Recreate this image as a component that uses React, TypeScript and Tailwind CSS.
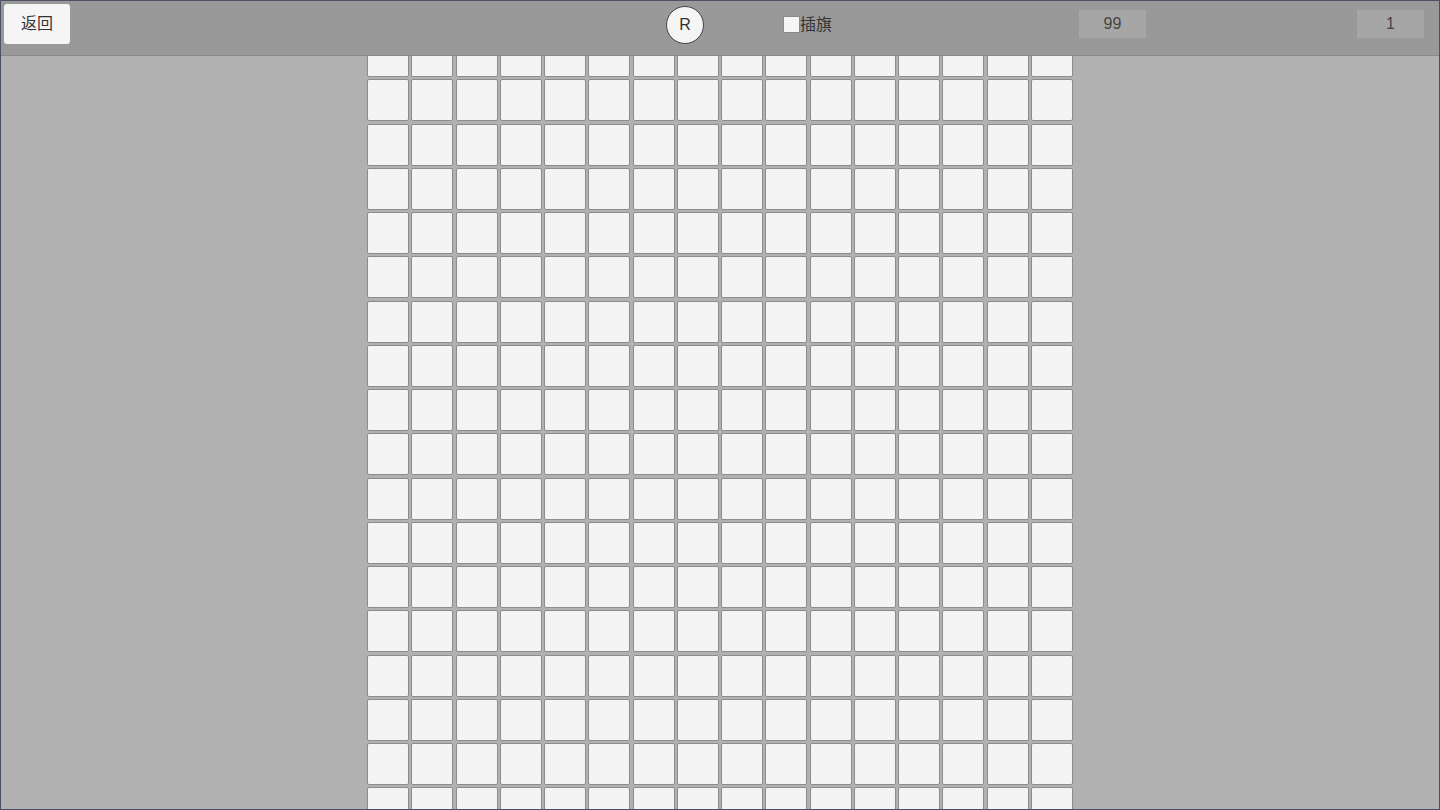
import React from "react";

export default function App() {
  const rows = 18;
  const cols = 16;
  const cells = Array.from({ length: rows * cols });
  return (
    <div
      className="w-[1440px] h-[810px] border border-[#4b5263] bg-[#b1b1b1] flex flex-col overflow-hidden"
      style={{ fontFamily: '"Liberation Sans", "Noto Sans CJK SC", sans-serif' }}
    >
      <div className="h-[55px] shrink-0 bg-[#999999] border-b border-[#8a8a8a] flex items-start relative z-10">
        <button className="ml-[3px] mt-[3px] w-[66px] h-[40px] bg-[#f5f5f5] rounded-[3px] text-[16px] text-[#333] flex items-center justify-center">
          返回
        </button>
        <button className="ml-[596px] mt-[5px] w-[38px] h-[38px] rounded-full bg-[#f5f5f5] border border-[#444] text-[16px] text-[#333] flex items-center justify-center">
          R
        </button>
        <div className="ml-[79px] mt-[15px] flex items-center">
          <div className="w-[17px] h-[17px] bg-[#f5f5f5] border border-[#8a8a8a]"></div>
          <span className="text-[16px] text-[#333] leading-none">插旗</span>
        </div>
        <div className="ml-[247px] mt-[9px] w-[67px] h-[28px] bg-[#a6a6a6] text-[16px] text-[#444] flex items-center justify-center">
          99
        </div>
        <div className="ml-auto mr-[15px] mt-[9px] w-[67px] h-[28px] bg-[#a6a6a6] text-[16px] text-[#444] flex items-center justify-center">
          1
        </div>
      </div>
      <div className="flex-1 overflow-hidden flex justify-center">
        <div className="w-[706px] mt-[-21px] grid grid-cols-16 gap-[2.25px] content-start">
          {cells.map((_, i) => (
            <div
              key={i}
              className="h-[42px] bg-[#f4f4f4] border border-[#8c8c8c] rounded-[2px]"
            ></div>
          ))}
        </div>
      </div>
    </div>
  );
}
